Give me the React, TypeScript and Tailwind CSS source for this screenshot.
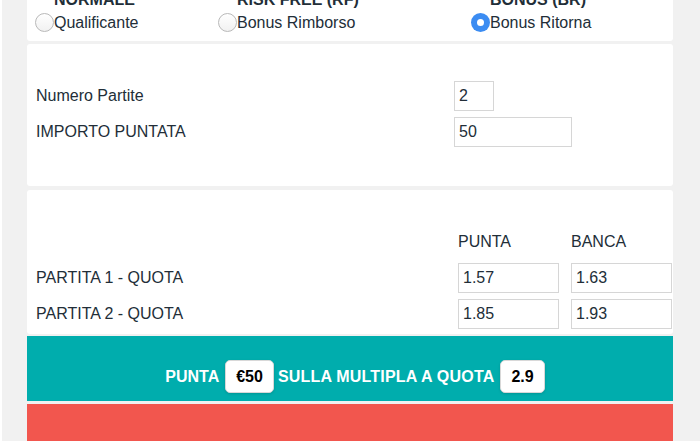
import React from "react";

const font = { fontFamily: '"Liberation Sans", Arial, sans-serif' };

const Radio = ({ checked }: { checked?: boolean }) =>
  checked ? (
    <span className="flex h-[19px] w-[19px] shrink-0 items-center justify-center rounded-full bg-[#3b8cf2]">
      <span className="h-[7px] w-[7px] rounded-full bg-white" />
    </span>
  ) : (
    <span className="h-[19px] w-[19px] shrink-0 rounded-full border border-[#b9b9b9] bg-gradient-to-b from-white to-[#f1f1f1]" />
  );

const Field = ({ value, w }: { value: string; w: string }) => (
  <div className={`${w} flex h-[30px] items-center border border-[#d6d6d6] bg-white px-[4px] text-[16px] text-[#222e38]`}>
    {value}
  </div>
);

const options = [
  { title: "NORMALE", label: "Qualificante" },
  { title: "RISK FREE (RF)", label: "Bonus Rimborso" },
  { title: "BONUS (BR)", label: "Bonus Ritorna", checked: true },
];

export default function App() {
  return (
    <div style={font} className="h-[441px] overflow-hidden bg-[#f1f1f1] text-[#222e38]">
      <div className="flex h-full">
        <div className="w-[2px] bg-white" />
        <div className="ml-[25px] flex w-[646px] flex-col">
          {/* bet type */}
          <div className="-mt-[20px] shrink-0 rounded-[3px] bg-white pb-[9px] pl-[8px] pt-[10px]">
            <div className="grid grid-cols-[183px_253px_1fr]">
              {options.map((o) => (
                <div key={o.title} className="flex flex-col gap-[2px]">
                  <div className="pl-[19px] text-[16px] font-bold leading-[20px]">{o.title}</div>
                  <div className="flex h-[20px] items-center pt-[1px]">
                    <Radio checked={o.checked} />
                    <span className="text-[16px] leading-[20px]">{o.label}</span>
                  </div>
                </div>
              ))}
            </div>
          </div>

          {/* partite / importo */}
          <div className="mt-[3px] shrink-0 rounded-[3px] bg-white pb-[39px] pl-[9px] pt-[37px]">
            <div className="grid grid-cols-[418px_1fr] items-center gap-y-[6px] text-[16px]">
              <span>Numero Partite</span>
              <Field value="2" w="w-[40px]" />
              <span>IMPORTO PUNTATA</span>
              <Field value="50" w="w-[118px]" />
            </div>
          </div>

          {/* quote */}
          <div className="mt-[4px] shrink-0 rounded-[3px] bg-white pb-[5px] pl-[9px] pt-[42px]">
            <div className="grid grid-cols-[410px_101px_101px] items-center gap-x-[12px] gap-y-[6px] text-[16px]">
              <span />
              <span className="mb-[5px] leading-[20px]">PUNTA</span>
              <span className="mb-[5px] leading-[20px]">BANCA</span>
              <span>PARTITA 1 - QUOTA</span>
              <Field value="1.57" w="w-[101px]" />
              <Field value="1.63" w="w-[101px]" />
              <span>PARTITA 2 - QUOTA</span>
              <Field value="1.85" w="w-[101px]" />
              <Field value="1.93" w="w-[101px]" />
            </div>
          </div>

          {/* summary */}
          <div className="mt-[2px] flex h-[65px] shrink-0 items-center justify-center bg-[#00adad] pl-[10px] pt-[16px] text-[16px] font-bold text-white">
            <span>PUNTA</span>
            <span className="ml-[6px] mr-[4px] flex h-[33px] items-center rounded-[5px] border border-[#d8d8d8] bg-white px-[10px] text-black shadow-sm">
              €50
            </span>
            <span className="tracking-[0.2px]">SULLA MULTIPLA A QUOTA</span>
            <span className="ml-[6px] flex h-[33px] items-center rounded-[5px] border border-[#d8d8d8] bg-white px-[10px] text-black shadow-sm">
              2.9
            </span>
          </div>

          <div className="mt-[3px] h-[60px] shrink-0 bg-[#f2564e]" />
        </div>
      </div>
    </div>
  );
}
